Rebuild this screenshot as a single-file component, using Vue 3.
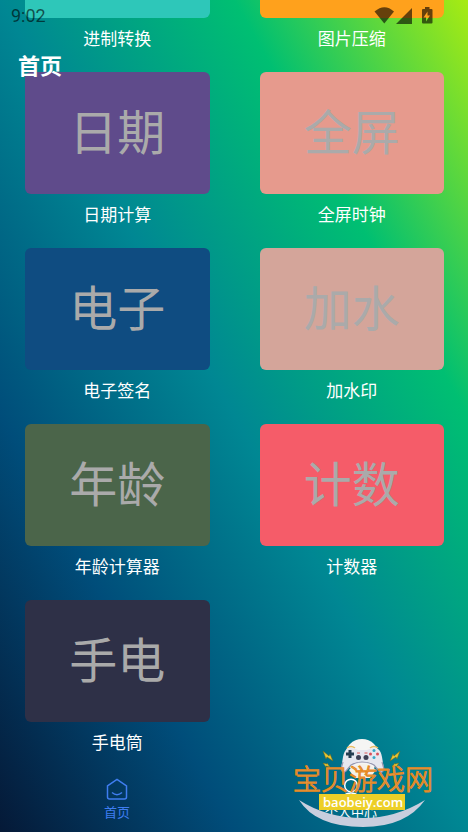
<script setup>
const tools = [
  { short: '进制', name: '进制转换', tone: 'teal' },
  { short: '图片', name: '图片压缩', tone: 'orange' },
  { short: '日期', name: '日期计算', tone: 'purple' },
  { short: '全屏', name: '全屏时钟', tone: 'salmon' },
  { short: '电子', name: '电子签名', tone: 'blue' },
  { short: '加水', name: '加水印', tone: 'blush' },
  { short: '年龄', name: '年龄计算器', tone: 'olive' },
  { short: '计数', name: '计数器', tone: 'red' },
  { short: '手电', name: '手电筒', tone: 'navy' },
]
</script>

<template>
  <div class="page">
    <header class="top">
      <div class="status">
        <span class="time">9:02</span>
        <svg class="status-icons" viewBox="0 0 60 18" aria-hidden="true">
          <path d="M0.5 4.500 Q10.500 -4 20 4.500 L10.300 16.500Z" />
          <path d="M22 17 L38 1 V17Z" />
          <path fill-rule="evenodd" d="M51 0h4.500v2h2q1 0 1 1v12.500q0 1-1 1h-8.500q-1 0-1-1V3q0-1 1-1h2zM53.500 4.500l-4 6h2.500v4l4-6h-2.500z" />
        </svg>
      </div>
      <h1>首页</h1>
    </header>

    <main class="tools">
      <a v-for="tool in tools" :key="tool.name" href="#" class="tool">
        <span class="card" :class="tool.tone">{{ tool.short }}</span>
        <span class="name">{{ tool.name }}</span>
      </a>
    </main>

    <nav class="tabs">
      <a href="#" class="tab active">
        <svg viewBox="0 0 24 24" aria-hidden="true">
          <path d="M2.500 7.800 12 1.300l9.500 6.500V19q0 2-2 2H4.500q-2 0-2-2Z" />
          <path d="M7 14.500q5 4.500 10 0" />
        </svg>
        <span>首页</span>
      </a>
      <a href="#" class="tab">
        <svg viewBox="0 0 24 24" aria-hidden="true">
          <circle cx="12" cy="7.500" r="6.300" />
          <path d="M3 22q1-7 9-7t9 7" />
        </svg>
        <span>个人中心</span>
      </a>
    </nav>

    <svg class="badge" viewBox="0 0 150 96" role="img" aria-label="宝贝游戏网 baobeiy.com">
      <path d="M8 64Q25 91 72 91Q115 91 134 64Q105 82 72 82Q36 82 8 64Z" fill="#c9cede" />
      <ellipse cx="71" cy="20" rx="17" ry="17" fill="#f5f5f4" />
      <path d="M56 12q4-3 8 0M79 12q4-3 8 0" fill="none" stroke="#e9bd63" stroke-width="1.500" />
      <path d="M56 13Q62 11 67 14H76Q81 11 87 13Q90 15 91 21L93 33Q92 38 88 35L83 29Q79 26 71 26Q64 26 60 29L55 35Q51 38 50 33L52 21Q53 15 56 13Z" fill="#e6e7ef" />
      <path d="M52 26L50 33Q51 38 55 35L60 29Q65 26 71 26Q78 26 83 29L88 35Q92 38 93 33L91 26" fill="none" stroke="#9697b0" stroke-width="1.200" />
      <path d="M58 34Q63 28 71 28Q80 28 85 34L79 42H64Z" fill="#f5f1e8" />
      <path d="M59 14v8M55 18h8" stroke="#243d50" stroke-width="3" />
      <g fill="#3f4155"><circle cx="67.500" cy="21.500" r="2.500" /><circle cx="75" cy="21.500" r="2.500" /></g>
      <path d="M66 17h3M73.500 17h3" stroke="#dc5858" />
      <circle cx="83" cy="14.500" r="1.500" fill="#35a9c9" /><circle cx="83" cy="21.500" r="1.500" fill="#35a9c9" />
      <circle cx="79.500" cy="18" r="1.500" fill="#d94f5a" /><circle cx="86.500" cy="18" r="1.500" fill="#d94f5a" />
      <g fill="#e9c532" stroke="#6d641b" stroke-width="0.500">
        <path d="M32 15l6 5 1-2 3 7-6-4-1 2z" /><path d="M32 27l4 1v-1l3 4-4-1v1z" />
        <path d="M109 15l-6 5-1-2-3 7 6-4 1 2z" /><path d="M108 27l-4 1v-1l-3 4 4-1v1z" />
      </g>
      <text class="site-title" x="2" y="54">宝贝游戏网</text>
      <rect x="28" y="58" width="86" height="16" fill="#edcf27" />
      <text class="site-url" x="32" y="71">baobeiy.com</text>
    </svg>
  </div>
</template>

<style>
body {
  margin: 0;
}
</style>

<style scoped>
.page {
  position: relative;
  display: flex;
  flex-direction: column;
  justify-content: flex-end;
  height: 100vh;
  overflow: hidden;
  background: linear-gradient(to right top, #051937, #004d7a, #008793, #00bf72, #a8eb12);
  font-family: "Noto Sans CJK SC", sans-serif;
  color: #fff;
}

.top {
  position: absolute;
  inset: 0 0 auto;
  z-index: 1;
}

.status {
  display: flex;
  justify-content: space-between;
  align-items: center;
  height: 32px;
  padding: 0 34px 0 11px;
  color: rgba(0, 0, 0, 0.6);
}

.time {
  font: 400 18px/32px Roboto, sans-serif;
}

.status-icons {
  width: 60px;
  height: 18px;
  fill: currentColor;
}

h1 {
  margin: 14px 18px;
  font-size: 22px;
  line-height: 36px;
  font-weight: 700;
}

.tools {
  flex: none;
  display: grid;
  grid-template-columns: 1fr 1fr;
  column-gap: 50px;
  padding: 0 24px 0 25px;
}

a {
  color: inherit;
  text-decoration: none;
}

.tool {
  display: flex;
  flex-direction: column;
  height: 176px;
}

.card {
  display: flex;
  justify-content: center;
  align-items: center;
  box-sizing: border-box;
  height: 122px;
  padding-bottom: 8px;
  border-radius: 6px;
  color: #aaa;
  font-size: 48px;
  line-height: 72px;
}

.name {
  font-size: 17px;
  line-height: 40px;
  text-align: center;
}

.teal { background: #2ec7b9; }
.orange { background: #ffa11c; }
.purple { background: #5f4b8b; }
.salmon { background: #e69a8d; }
.blue { background: #0f4c81; }
.blush { background: #d4a59a; }
.olive { background: #4b654a; }
.red { background: #f55c69; }
.navy { background: #2e3047; }

.tabs {
  flex: none;
  display: grid;
  grid-template-columns: 1fr 1fr;
  height: 56px;
}

.tab {
  display: flex;
  flex-direction: column;
  align-items: center;
  font-size: 13px;
  line-height: 20px;
}

.tab svg {
  width: 24px;
  height: 24px;
  margin-top: 2px;
  fill: none;
  stroke: currentColor;
  stroke-width: 1.5;
}

.active {
  color: #3f7df0;
}

.badge {
  position: absolute;
  right: 27px;
  bottom: 0;
  z-index: 2;
  width: 150px;
  height: 96px;
}

.site-title {
  font-size: 28px;
  font-weight: 300;
  fill: #d5b080;
  stroke: #e8871a;
  stroke-width: 1;
}

.site-url {
  font: 600 13px "Open Sans", sans-serif;
  fill: #fff;
}
</style>
